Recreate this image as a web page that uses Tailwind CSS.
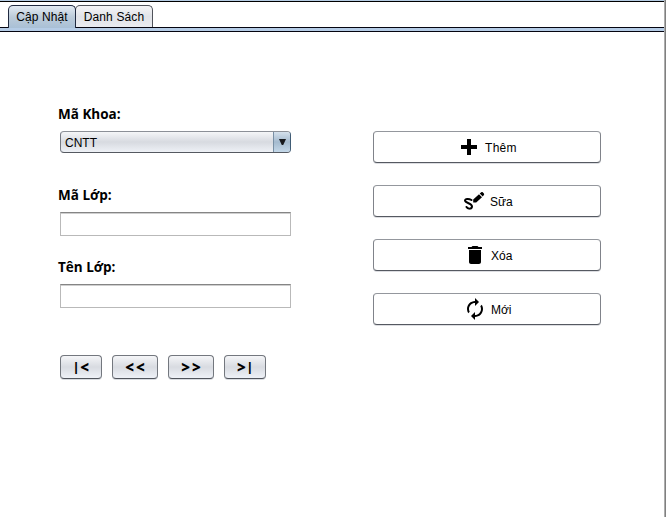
<!DOCTYPE html>
<html lang="vi">
<head>
<meta charset="utf-8">
<title>Lớp</title>
<script src="https://cdn.jsdelivr.net/npm/@tailwindcss/browser@4"></script>
</head>
<body class="h-[517px] w-[666px] overflow-hidden bg-white font-['Liberation_Sans',Arial,sans-serif] text-[12px] leading-[14px] text-black">
<div class="flex h-full w-full">
  <main class="flex w-[664px] flex-col">
    <div class="h-[2px] shrink-0 border-b border-black bg-[#b5cce3]"></div>
    <nav class="flex h-[26px] shrink-0 border-b border-[#050510] pt-[3px] pl-2">
      <button class="z-10 h-[23px] w-[68px] rounded-t-[5px] border border-b-0 border-[#202a40] bg-linear-to-b from-[#e3ebf3] via-[#bccbd9] to-[#a9c0d6] pb-px tracking-[0.1px] whitespace-nowrap">Cập Nhật</button>
      <button class="-ml-px h-[22px] w-[78px] rounded-t-[5px] border border-b-0 border-[#50535b] bg-linear-to-b from-[#f5f5f7] via-[#e1e3e8] to-[#e9ebf0] tracking-[0.15px] whitespace-nowrap">Danh Sách</button>
    </nav>
    <div class="h-1 shrink-0 border-b border-[#050510] bg-[#b5cce6]"></div>

    <div class="flex gap-[82px] pl-[60px]">
      <section class="flex w-[231px] flex-col pt-[72px]">
        <label class="-ml-[2px] h-[27px] font-['Open_Sans','Noto_Sans',sans-serif] text-[13.5px] leading-[20px] font-bold">Mã Khoa:</label>
        <div class="flex h-[22px] overflow-hidden rounded-[4px] border border-t-[#8c9097] border-r-[#405c75] border-b-[#555961] border-l-[#757982] bg-linear-to-b from-[#f5f6f8] via-[#d7dae0] to-[#eef1f6]">
          <span class="flex-1 pt-[4px] pl-[4px]">CNTT</span>
          <span class="flex w-[17px] justify-center border-l border-[#7990a5] bg-linear-to-b from-[#d5e1ec] via-[#a4bace] to-[#c4d8e9] pt-[7px]">
            <svg class="h-[6px] w-[7px]" viewBox="0 0 7 6"><path d="M0 0h7L4.200 6H2.800z" fill="#17191d"/></svg>
          </span>
        </div>
        <label class="mt-[32px] -ml-[2px] h-[27px] font-['Open_Sans','Noto_Sans',sans-serif] text-[13.5px] leading-[20px] font-bold">Mã Lớp:</label>
        <input class="h-[24px] border border-[#b9b9b9] border-t-[#858585] bg-white shadow-[inset_0_1px_0_#cfcfcf]">
        <label class="mt-[21px] -ml-[2px] h-[27px] font-['Open_Sans','Noto_Sans',sans-serif] text-[13.5px] leading-[20px] font-bold">Tên Lớp:</label>
        <input class="h-[24px] border border-[#b9b9b9] border-t-[#858585] bg-white shadow-[inset_0_1px_0_#cfcfcf]">
        <div class="mt-[47px] flex gap-[10px] font-['Open_Sans','Noto_Sans',sans-serif] text-[15px] font-extrabold">
          <button class="flex h-6 w-[42px] items-center justify-center gap-px rounded-[4px] border border-[#73777e] border-b-[#50545c] bg-linear-to-b from-[#f5f6f8] via-[#d8dbe1] to-[#eef1f7] shadow-[0_1px_0_#d9dce1]"><span class="text-[12px]">|</span><span>&lt;</span></button>
          <button class="h-6 w-[46px] rounded-[4px] border border-[#73777e] border-b-[#50545c] bg-linear-to-b from-[#f5f6f8] via-[#d8dbe1] to-[#eef1f7] pl-[2px] tracking-[2px] shadow-[0_1px_0_#d9dce1]">&lt;&lt;</button>
          <button class="h-6 w-[46px] rounded-[4px] border border-[#73777e] border-b-[#50545c] bg-linear-to-b from-[#f5f6f8] via-[#d8dbe1] to-[#eef1f7] pl-[2px] tracking-[2px] shadow-[0_1px_0_#d9dce1]">&gt;&gt;</button>
          <button class="flex h-6 w-[42px] items-center justify-center gap-px rounded-[4px] border border-[#73777e] border-b-[#50545c] bg-linear-to-b from-[#f5f6f8] via-[#d8dbe1] to-[#eef1f7] shadow-[0_1px_0_#d9dce1]"><span>&gt;</span><span class="text-[12px]">|</span></button>
        </div>
      </section>

      <section class="flex w-[228px] flex-col gap-[22px] pt-[99px]">
        <button class="flex h-8 items-center rounded-[4px] border border-[#80838a] border-t-[#94979d] border-b-[#555961] bg-white pl-[83px] shadow-[0_1px_0_#dcdde1]">
          <svg class="mr-[4px] size-6" viewBox="0 0 24 24"><path d="M10 4h4v6h6v4h-6v6h-4v-6H4v-4h6z"/></svg><span class="pt-[2px] tracking-[0.3px]">Thêm</span>
        </button>
        <button class="flex h-8 items-center rounded-[4px] border border-[#80838a] border-t-[#94979d] border-b-[#555961] bg-white pl-[88px] shadow-[0_1px_0_#dcdde1]">
          <svg class="mr-[4px] size-6" viewBox="0 0 24 24"><path d="M9.500 11C7 9.600 2.700 9.600 3 11.800 3.400 14 10 14.200 10 17.500c0 2.900-4.400 2.600-5.500.5" fill="none" stroke="#000" stroke-width="2" stroke-linecap="round"/><path d="M11.200 13.400v-3l5.800-5.200 3 3-5.800 5.200zM17.700 4.600l1.600-1.300c.5-.4 1-.4 1.400 0l1.200 1.200c.4.400.4 1 0 1.400L20.700 7.500z"/></svg><span class="pt-[2px]">Sữa</span>
        </button>
        <button class="flex h-8 items-center rounded-[4px] border border-[#80838a] border-t-[#94979d] border-b-[#555961] bg-white pl-[89px] shadow-[0_1px_0_#dcdde1]">
          <svg class="mr-[4px] size-6" viewBox="0 0 24 24"><path d="M6 19c0 1.100.9 2 2 2h8c1.100 0 2-.9 2-2V7H6zM19 4h-3.500l-1-1h-5l-1 1H5v2h14z"/></svg><span class="pt-[2px]">Xóa</span>
        </button>
        <button class="flex h-8 items-center rounded-[4px] border border-[#80838a] border-t-[#94979d] border-b-[#555961] bg-white pl-[89px] shadow-[0_1px_0_#dcdde1]">
          <svg class="mr-[4px] size-6" viewBox="0 0 24 24"><path d="M12 6v3l4-4-4-4v3c-4.420 0-8 3.580-8 8 0 1.570.46 3.030 1.240 4.260L6.700 14.800C6.250 13.970 6 13.010 6 12c0-3.310 2.690-6 6-6zm6.760 1.740L17.300 9.200c.44.840.7 1.790.7 2.800 0 3.310-2.690 6-6 6v-3l-4 4 4 4v-3c4.420 0 8-3.580 8-8 0-1.570-.46-3.030-1.240-4.260z"/></svg><span class="pt-[2px]">Mới</span>
        </button>
      </section>
    </div>
  </main>
  <div class="w-[2px] border-l border-[#adadad] bg-[#808080]"></div>
</div>
</body>
</html>
